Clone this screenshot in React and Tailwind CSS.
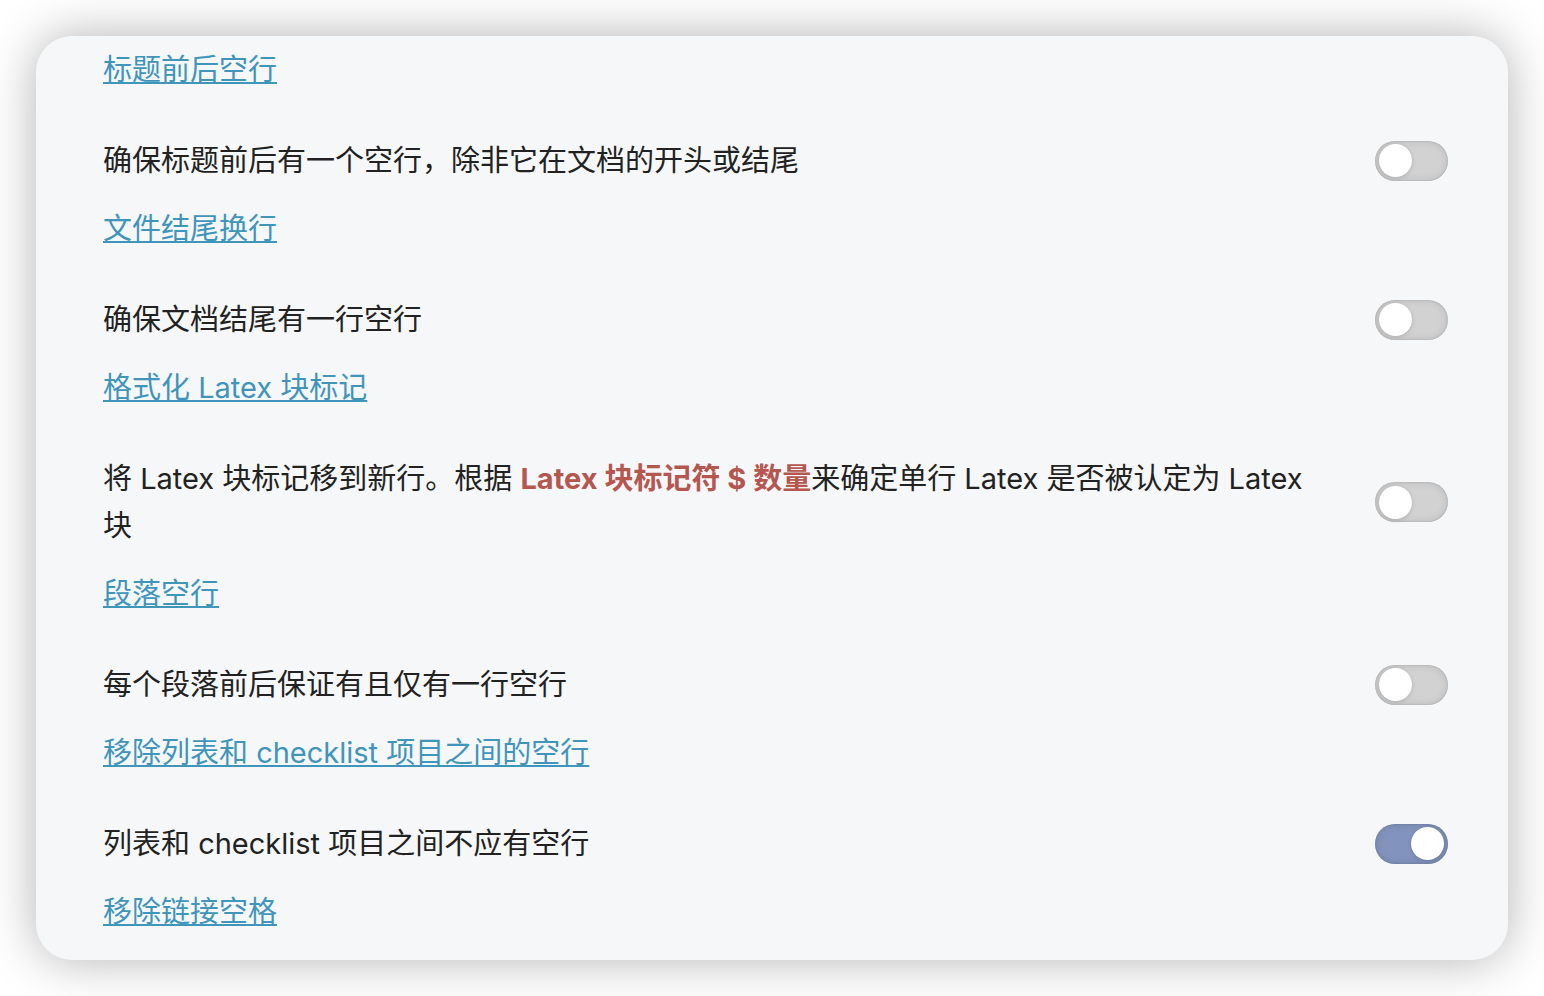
const rules = [
  {
    id: 'heading-blank-lines',
    title: '标题前后空行',
    description: '确保标题前后有一个空行，除非它在文档的开头或结尾',
    enabled: false,
  },
  {
    id: 'line-break-at-end',
    title: '文件结尾换行',
    description: '确保文档结尾有一行空行',
    enabled: false,
  },
  {
    id: 'latex-blocks',
    title: '格式化 Latex 块标记',
    description: (
      <>
        将 Latex 块标记移到新行。根据{' '}
        <strong className="font-bold text-[#b5564f]">Latex 块标记符 $ 数量</strong>
        来确定单行 Latex 是否被认定为 Latex 块
      </>
    ),
    enabled: false,
  },
  {
    id: 'paragraph-blank-lines',
    title: '段落空行',
    description: '每个段落前后保证有且仅有一行空行',
    enabled: false,
  },
  {
    id: 'list-blank-lines',
    title: '移除列表和 checklist 项目之间的空行',
    description: '列表和 checklist 项目之间不应有空行',
    enabled: true,
  },
  { id: 'link-spaces', title: '移除链接空格' },
];

function Toggle({ id, enabled }) {
  return (
    <input
      id={id}
      type="checkbox"
      role="switch"
      defaultChecked={enabled}
      className="flex h-10 w-[73px] shrink-0 cursor-pointer appearance-none items-center rounded-full bg-[#d2d2d2] px-1 shadow-[inset_0_0_8px_rgba(0,0,0,0.12),inset_0_0_2px_rgba(0,0,0,0.2)] before:size-[33px] before:rounded-full before:bg-white before:shadow-[0_1px_4px_rgba(0,0,0,0.16)] before:content-[''] checked:justify-end checked:bg-[#8293bd]"
    />
  );
}

function Rule({ id, title, description, enabled }) {
  return (
    <section className="flex flex-col gap-11">
      <h2>
        <a
          href={`#${id}`}
          className="text-[#4095bb] underline decoration-2 underline-offset-2 [text-decoration-skip-ink:none]"
        >
          {title}
        </a>
      </h2>
      {description && (
        <div className="flex items-center justify-between gap-12">
          <label htmlFor={id}>{description}</label>
          <Toggle id={id} enabled={enabled} />
        </div>
      )}
    </section>
  );
}

export default function App() {
  return (
    <div className="min-h-screen bg-white p-9">
      <main className="flex flex-col gap-[21px] rounded-[36px] bg-[#f5f7f9] pt-[10px] pr-[60px] pb-[25px] pl-[67px] font-['Inter','Noto_Sans_CJK_SC',sans-serif] text-[29px] leading-[47px] text-[#222222] shadow-[0_0_50px_rgba(0,0,0,0.3)]">
        {rules.map((rule) => (
          <Rule key={rule.id} {...rule} />
        ))}
      </main>
    </div>
  );
}
